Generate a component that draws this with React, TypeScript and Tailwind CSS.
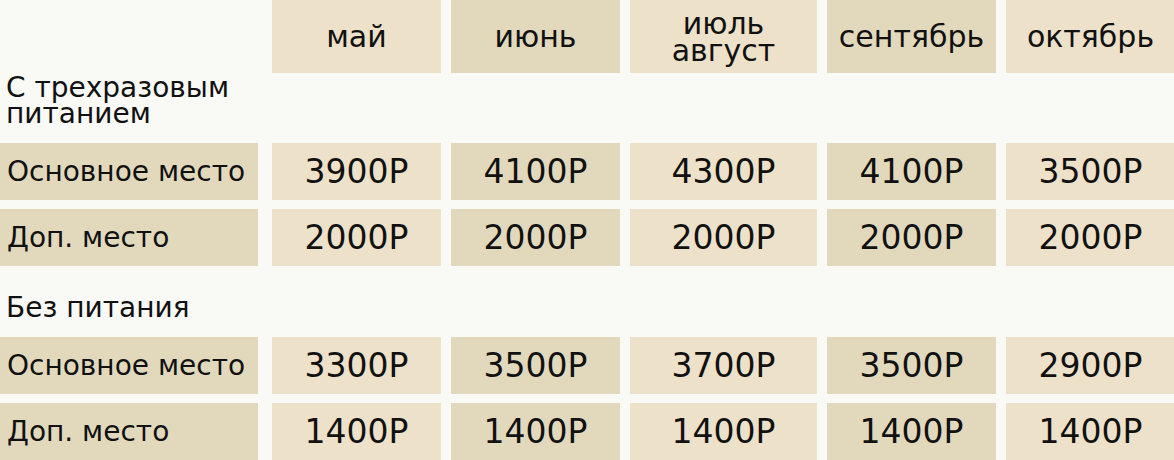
const light = 'bg-[#ede1c9]';
const dark = 'bg-[#e2d9bd]';

const months = [
  { label: ['май'], bg: light },
  { label: ['июнь'], bg: dark },
  { label: ['июль', 'август'], bg: light },
  { label: ['сентябрь'], bg: dark },
  { label: ['октябрь'], bg: light },
];

const sections = [
  {
    title: ['С трехразовым', 'питанием'],
    box: 'h-[70px] pb-[14px]',
    rows: [
      { name: 'Основное место', prices: [3900, 4100, 4300, 4100, 3500] },
      { name: 'Доп. место', prices: [2000, 2000, 2000, 2000, 2000] },
    ],
  },
  {
    title: ['Без питания'],
    box: 'h-[71px] pt-[12px]',
    rows: [
      { name: 'Основное место', prices: [3300, 3500, 3700, 3500, 2900] },
      { name: 'Доп. место', prices: [1400, 1400, 1400, 1400, 1400] },
    ],
  },
];

const cols = 'grid grid-cols-[262px_169px_169px_187px_169px_169px] gap-x-[10px]';

function Lines({ lines }: { lines: string[] }) {
  return (
    <p>
      {lines.map((l, i) => (
        <span key={l}>
          {i > 0 ? <br /> : null}
          {l}
        </span>
      ))}
    </p>
  );
}

function PriceRow({ name, prices }: { name: string; prices: number[] }) {
  return (
    <div className={`${cols} h-[57px]`}>
      <div className={`flex w-[258px] items-center whitespace-nowrap pl-[7px] text-[28px] ${dark}`}>{name}</div>
      {prices.map((p, i) => (
        <div key={i} className={`flex items-center justify-center text-[33px] ${months[i].bg}`}>{p}Р</div>
      ))}
    </div>
  );
}

export default function App() {
  return (
    <div className="h-[460px] w-[1174px] overflow-hidden bg-[#f9f9f5] text-[#111] [font-family:'DejaVu_Sans',sans-serif]">
      <div className={`${cols} h-[73px]`}>
        <div />
        {months.map((m) => (
          <div key={m.label.join()} className={`flex items-center justify-center text-center text-[30px] leading-[27px] ${m.bg}`}>
            <Lines lines={m.label} />
          </div>
        ))}
      </div>
      {sections.map((s, si) => (
        <div key={si}>
          <div className={`flex flex-col justify-center whitespace-nowrap pl-[6px] text-[28px] leading-[26px] ${s.box}`}>
            <Lines lines={s.title} />
          </div>
          <div className="flex flex-col gap-[9px]">
            {s.rows.map((r) => <PriceRow key={r.name} {...r} />)}
          </div>
        </div>
      ))}
    </div>
  );
}
